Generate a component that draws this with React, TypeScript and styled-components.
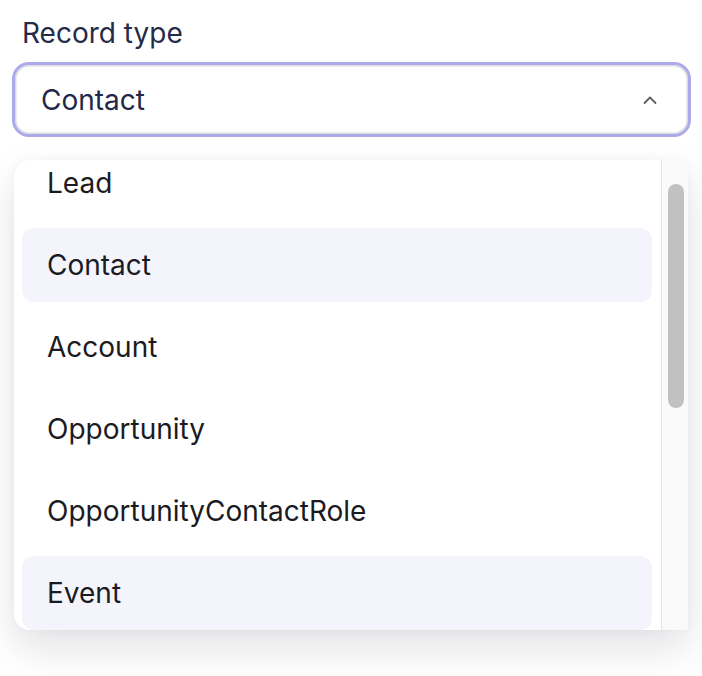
import styled, { createGlobalStyle } from 'styled-components';

const GlobalStyle = createGlobalStyle`
  html, body {
    margin: 0;
    padding: 0;
    background: #ffffff;
  }
  body {
    font-family: Inter, "Noto Sans", sans-serif;
  }
`;

const Page = styled.div`
  padding: 14px 0 0 12px;
  width: 702px;
  height: 676px;
  box-sizing: border-box;
  overflow: hidden;
`;

const Label = styled.div`
  font-size: 28px;
  line-height: 38px;
  color: #262b47;
  padding-left: 10px;
  margin-bottom: 10px;
`;

const Trigger = styled.div`
  width: 679px;
  height: 75px;
  box-sizing: border-box;
  border: 3px solid #abaaea;
  border-radius: 17px;
  display: flex;
  align-items: center;
  justify-content: space-between;
  padding: 0 30px 0 26px;
  box-shadow: inset 0 0 0 1.5px #dcdce0;
`;

const Value = styled.span`
  font-size: 28px;
  color: #23284a;
`;

const Panel = styled.div`
  margin: 23px 0 0 2px;
  width: 674px;
  height: 470px;
  border-radius: 16px 0 0 16px;
  background: #ffffff;
  box-shadow: 0 18px 40px rgba(20, 20, 40, 0.12), 0 0 8px rgba(20, 20, 40, 0.03);
  display: flex;
  overflow: hidden;
`;

const List = styled.div`
  flex: 1;
  padding: 0 9px 0 8px;
  margin-top: -14px;
`;

const Option = styled.div<{ $active?: boolean }>`
  height: 74px;
  margin-bottom: 8px;
  border-radius: 12px;
  display: flex;
  align-items: center;
  padding-left: 25px;
  font-size: 28px;
  color: #1b1b1f;
  background: ${(p) => (p.$active ? '#f4f4fd' : 'transparent')};
`;

const Track = styled.div`
  width: 27px;
  box-sizing: border-box;
  border-left: 1px solid #e6e6e6;
  background: #fafafa;
  padding: 24px 4px 0 6px;
`;

const Thumb = styled.div`
  height: 224px;
  border-radius: 8px;
  background: #c1c1c1;
`;

const options = [
  { name: 'Lead' },
  { name: 'Contact', active: true },
  { name: 'Account' },
  { name: 'Opportunity' },
  { name: 'OpportunityContactRole' },
  { name: 'Event', active: true },
];

const ChevronUp = () => (
  <svg width="16" height="10" viewBox="0 0 16 10" fill="none">
    <path d="M2.5 8 L8 2.5 L13.5 8" stroke="#606060" strokeWidth="1.8" strokeLinecap="round" strokeLinejoin="round" />
  </svg>
);

export default function App() {
  return (
    <Page>
      <GlobalStyle />
      <Label>Record type</Label>
      <Trigger>
        <Value>Contact</Value>
        <ChevronUp />
      </Trigger>
      <Panel>
        <List>
          {options.map((o) => (
            <Option key={o.name} $active={o.active}>
              {o.name}
            </Option>
          ))}
        </List>
        <Track>
          <Thumb />
        </Track>
      </Panel>
    </Page>
  );
}
